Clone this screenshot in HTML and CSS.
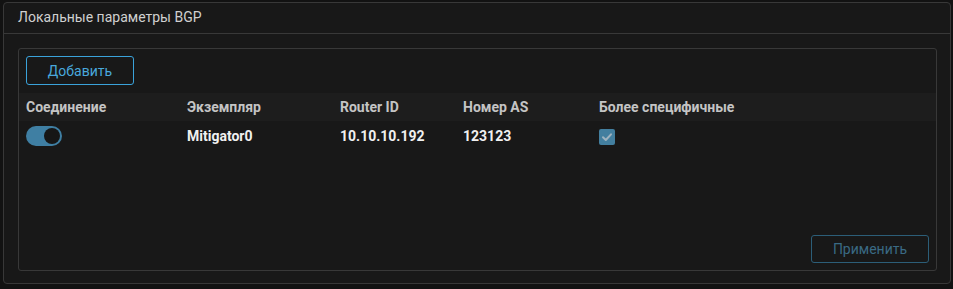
FILE: index.html
```html
<!DOCTYPE html>
<html lang="ru">
<head>
    <meta charset="UTF-8">
    <title>Локальные параметры BGP</title>
    <link rel="stylesheet" href="styles.css">
</head>
<body>
    <div class="card">
        <div class="card-header">Локальные параметры BGP</div>
        <div class="card-body">
            <div class="panel">
                <div class="toolbar">
                    <button class="btn btn-primary">Добавить</button>
                </div>
                <table class="bgp-table">
                    <thead>
                        <tr>
                            <th class="col-conn">Соединение</th>
                            <th class="col-inst">Экземпляр</th>
                            <th class="col-rid">Router ID</th>
                            <th class="col-as">Номер AS</th>
                            <th>Более специфичные</th>
                        </tr>
                    </thead>
                    <tbody>
                        <tr>
                            <td><span class="toggle on"><span class="knob"></span></span></td>
                            <td>Mitigator0</td>
                            <td>10.10.10.192</td>
                            <td>123123</td>
                            <td>
                                <span class="check">
                                    <svg width="12" height="12" viewBox="0 0 12 12"><path d="M2 6.3 L4.8 9 L10 3.3" fill="none" stroke="#9fb3bf" stroke-width="2" stroke-linecap="round" stroke-linejoin="round"/></svg>
                                </span>
                            </td>
                        </tr>
                    </tbody>
                </table>
                <div class="footer">
                    <button class="btn btn-muted">Применить</button>
                </div>
            </div>
        </div>
    </div>
</body>
</html>
```

FILE: styles.css
```css
body {
    margin: 0;
    padding: 2px 2px 0 3px;
    background-color: #121212;
    font-family: Roboto, "Liberation Sans", sans-serif;
    font-size: 14px;
    color: #e6e6e6;
}
.card {
    width: 948px;
    height: 282px;
    box-sizing: border-box;
    background-color: #181818;
    border: 1px solid #383838;
    border-radius: 4px;
    display: flex;
    flex-direction: column;
}
.card-header {
    height: 30px;
    line-height: 29px;
    padding-left: 14px;
    color: #d0d0d0;
    border-bottom: 1px solid #383838;
}
.card-body {
    flex: 1;
    padding: 14px 13px 12px 14px;
    display: flex;
}
.panel {
    flex: 1;
    border: 1px solid #383838;
    border-radius: 3px;
    display: flex;
    flex-direction: column;
}
.toolbar {
    padding: 7px 7px 8px;
}
.btn {
    font-family: inherit;
    font-size: 14px;
    background: transparent;
    border-radius: 3px;
    height: 29px;
    cursor: pointer;
}
.btn-primary {
    width: 108px;
    border: 1px solid #3aa2da;
    color: #49a8dc;
}
.btn-muted {
    width: 118px;
    height: 28px;
    border: 1px solid #2c5e78;
    color: #3a6a84;
}
.bgp-table {
    width: 100%;
    border-collapse: collapse;
}
.bgp-table th {
    background-color: #1d1d1d;
    color: #c4c4c4;
    font-weight: 700;
    text-align: left;
    height: 28px;
    padding: 0 0 0 7px;
}
.bgp-table td {
    color: #f0f0f0;
    font-weight: 700;
    height: 30px;
    padding: 0 0 0 7px;
    vertical-align: middle;
}
.col-conn { width: 154px; }
.col-inst { width: 146px; }
.col-rid { width: 116px; }
.col-as { width: 129px; }
.toggle {
    display: inline-block;
    position: relative;
    width: 36px;
    height: 20px;
    border-radius: 10px;
    background-color: #3f7fa3;
    vertical-align: middle;
}
.toggle .knob {
    position: absolute;
    top: 2px;
    right: 2px;
    width: 16px;
    height: 16px;
    border-radius: 50%;
    background-color: #161616;
}
.check {
    display: inline-flex;
    align-items: center;
    justify-content: center;
    width: 16px;
    height: 16px;
    border-radius: 2px;
    background-color: #437f9f;
    vertical-align: middle;
}
.footer {
    margin-top: auto;
    display: flex;
    justify-content: flex-end;
    padding: 0 7px 7px;
}
```
